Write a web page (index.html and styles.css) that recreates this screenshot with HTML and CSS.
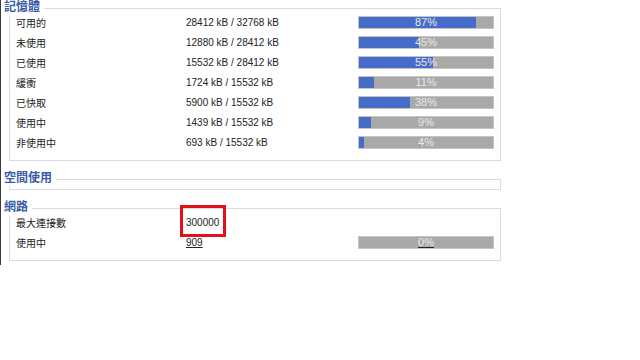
FILE: index.html
```html
<!DOCTYPE html>
<html lang="zh-Hant">
  <head>
    <meta charset="UTF-8" />
    <meta name="viewport" content="width=device-width, initial-scale=1.0" />
    <link rel="stylesheet" href="styles.css">
    <title>系統狀態</title>
  </head>
  <body>
    <div class="panel">
      <!-- 記憶體 -->
      <div class="group">
        <div class="group-head">
          <span class="group-title">記憶體</span>
          <span class="group-line"></span>
        </div>
        <div class="group-body">
          <div class="row">
            <span class="label">可用的</span>
            <span class="value">28412 kB / 32768 kB</span>
            <div class="bar"><div class="fill" style="width: 87%"></div><span class="pct">87%</span></div>
          </div>
          <div class="row">
            <span class="label">未使用</span>
            <span class="value">12880 kB / 28412 kB</span>
            <div class="bar"><div class="fill" style="width: 45%"></div><span class="pct">45%</span></div>
          </div>
          <div class="row">
            <span class="label">已使用</span>
            <span class="value">15532 kB / 28412 kB</span>
            <div class="bar"><div class="fill" style="width: 55%"></div><span class="pct">55%</span></div>
          </div>
          <div class="row">
            <span class="label">緩衝</span>
            <span class="value">1724 kB / 15532 kB</span>
            <div class="bar"><div class="fill" style="width: 11%"></div><span class="pct">11%</span></div>
          </div>
          <div class="row">
            <span class="label">已快取</span>
            <span class="value">5900 kB / 15532 kB</span>
            <div class="bar"><div class="fill" style="width: 38%"></div><span class="pct">38%</span></div>
          </div>
          <div class="row">
            <span class="label">使用中</span>
            <span class="value">1439 kB / 15532 kB</span>
            <div class="bar"><div class="fill" style="width: 9%"></div><span class="pct">9%</span></div>
          </div>
          <div class="row">
            <span class="label">非使用中</span>
            <span class="value">693 kB / 15532 kB</span>
            <div class="bar"><div class="fill" style="width: 4%"></div><span class="pct">4%</span></div>
          </div>
        </div>
      </div>

      <!-- 空間使用 -->
      <div class="group">
        <div class="group-head">
          <span class="group-title">空間使用</span>
          <span class="group-line"></span>
        </div>
        <div class="group-body empty"></div>
      </div>

      <!-- 網路 -->
      <div class="group">
        <div class="group-head">
          <span class="group-title">網路</span>
          <span class="group-line"></span>
        </div>
        <div class="group-body">
          <div class="row">
            <span class="label">最大連接數</span>
            <span class="value marked">300000</span>
          </div>
          <div class="row">
            <span class="label">使用中</span>
            <span class="value link">909</span>
            <div class="bar"><div class="fill" style="width: 0%"></div><span class="pct link">0%</span></div>
          </div>
        </div>
      </div>
    </div>
  </body>
</html>
```

FILE: styles.css
```css
body {
  margin: 0;
  background-color: #fff;
  font-family: "Liberation Sans", "Noto Sans CJK TC", sans-serif;
  font-size: 10px;
  color: #222;
}

.panel {
  width: 500px;
  height: 265px;
  border-left: 1px solid #3a3a3a;
}

/* groups */
.group {
  margin-left: 8px;
}
.group + .group {
  margin-top: 10px;
}

.group-head {
  display: flex;
  height: 12px;
}
.group-title {
  margin-left: -5px;
  padding-right: 4px;
  height: 15px;
  line-height: 15px;
  font-size: 12px;
  font-weight: bold;
  color: #3a5ba8;
  background-color: #fff;
  white-space: nowrap;
}
.group-line {
  flex: 1;
  margin-top: 8px;
  border-top: 1px solid #dcdcdc;
  border-right: 1px solid #dcdcdc;
}

.group-body {
  border: 1px solid #dcdcdc;
  border-top: none;
  padding-bottom: 8px;
}
.group-body.empty {
  height: 6px;
  padding-bottom: 0;
}

/* rows */
.row {
  display: grid;
  grid-template-columns: 170px 172px 136px;
  align-items: center;
  height: 20px;
  padding-left: 6px;
}
.label {
  white-space: nowrap;
}
.value {
  position: relative;
  white-space: nowrap;
}
.link {
  text-decoration: underline;
}
.marked::after {
  content: "";
  position: absolute;
  left: -6px;
  top: -12px;
  width: 40px;
  height: 26px;
  border: 3px solid #e3101c;
}

/* progress bars */
.bar {
  position: relative;
  height: 11px;
  border: 1px solid #c4c4c4;
  background-color: #a9a9a9;
}
.fill {
  height: 100%;
  background-color: #476bc9;
}
.pct {
  position: absolute;
  left: 0;
  right: 0;
  top: -1px;
  line-height: 13px;
  text-align: center;
  font-size: 11px;
  color: #eaeaea;
}
.pct.link {
  text-decoration-color: #222;
}
```
